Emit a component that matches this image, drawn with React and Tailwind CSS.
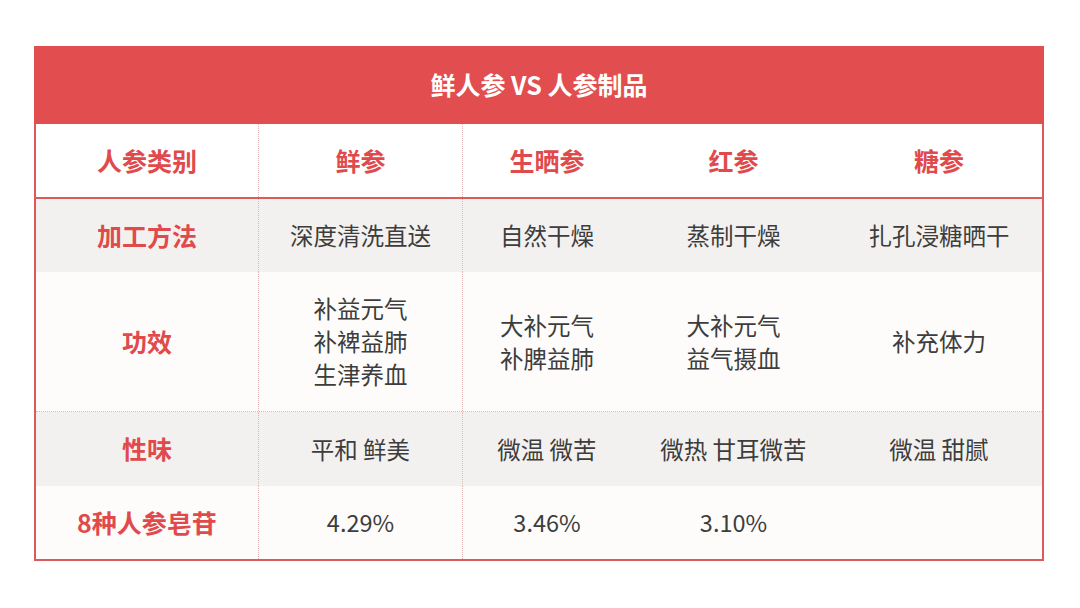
import React from "react";

const cols = ["人参类别", "鲜参", "生晒参", "红参", "糖参"];

const rows = [
  { label: "加工方法", cells: [["深度清洗直送"], ["自然干燥"], ["蒸制干燥"], ["扎孔浸糖晒干"]], bg: "bg-[#f3f1ef]", h: "h-[73px]" },
  { label: "功效", cells: [["补益元气", "补裨益肺", "生津养血"], ["大补元气", "补脾益肺"], ["大补元气", "益气摄血"], ["补充体力"]], bg: "bg-[#fdfcfa]", h: "h-[140px]", dotted: true },
  { label: "性味", cells: [["平和 鲜美"], ["微温 微苦"], ["微热 甘耳微苦"], ["微温 甜腻"]], bg: "bg-[#f3f1ef]", h: "h-[74px]" },
  { label: "8种人参皂苷", cells: [["4.29%"], ["3.46%"], ["3.10%"], []], bg: "bg-[#fdfcfa]", h: "h-[73px]" },
];

const grid = "grid grid-cols-[223px_204px_168px_205px_1fr]";
const divider = ["border-r border-dotted border-[#e3b5b5]", "border-r border-dotted border-[#e3b5b5]", "", "", ""];

export default function App() {
  return (
    <div className="w-[1080px] h-[608px] bg-white pt-[46px] pl-[34px]" style={{ fontFamily: '"Noto Sans CJK SC", "Noto Sans", sans-serif' }}>
      <div className="w-[1010px] border-2 border-t-0 border-[#dc5a5c]">
        <div className="h-[78px] -mx-[2px] bg-[#e24d4f] flex items-center justify-center text-white font-bold text-[25px]">
          鲜人参 VS 人参制品
        </div>

        <div className={`${grid} h-[75px] bg-white border-b-2 border-[#dc5a5c]`}>
          {cols.map((c, i) => (
            <div key={c} className={`flex items-center justify-center text-[#e04a4c] font-bold text-[25px] ${divider[i]}`}>
              {c}
            </div>
          ))}
        </div>

        {rows.map((r) => (
          <div key={r.label} className={`${grid} ${r.h} ${r.bg} ${r.dotted ? "border-b border-dotted border-[#e3b5b5]" : ""}`}>
            <div className={`flex items-center justify-center text-[#e04a4c] font-bold text-[25px] ${divider[0]}`}>{r.label}</div>
            {r.cells.map((lines, i) => (
              <div key={i} className={`flex flex-col items-center justify-center text-[#3d3d3d] text-[23.5px] leading-[33px] ${divider[i + 1]}`}>
                {lines.map((l) => (
                  <span key={l} className="whitespace-pre">{l}</span>
                ))}
              </div>
            ))}
          </div>
        ))}
      </div>
    </div>
  );
}
